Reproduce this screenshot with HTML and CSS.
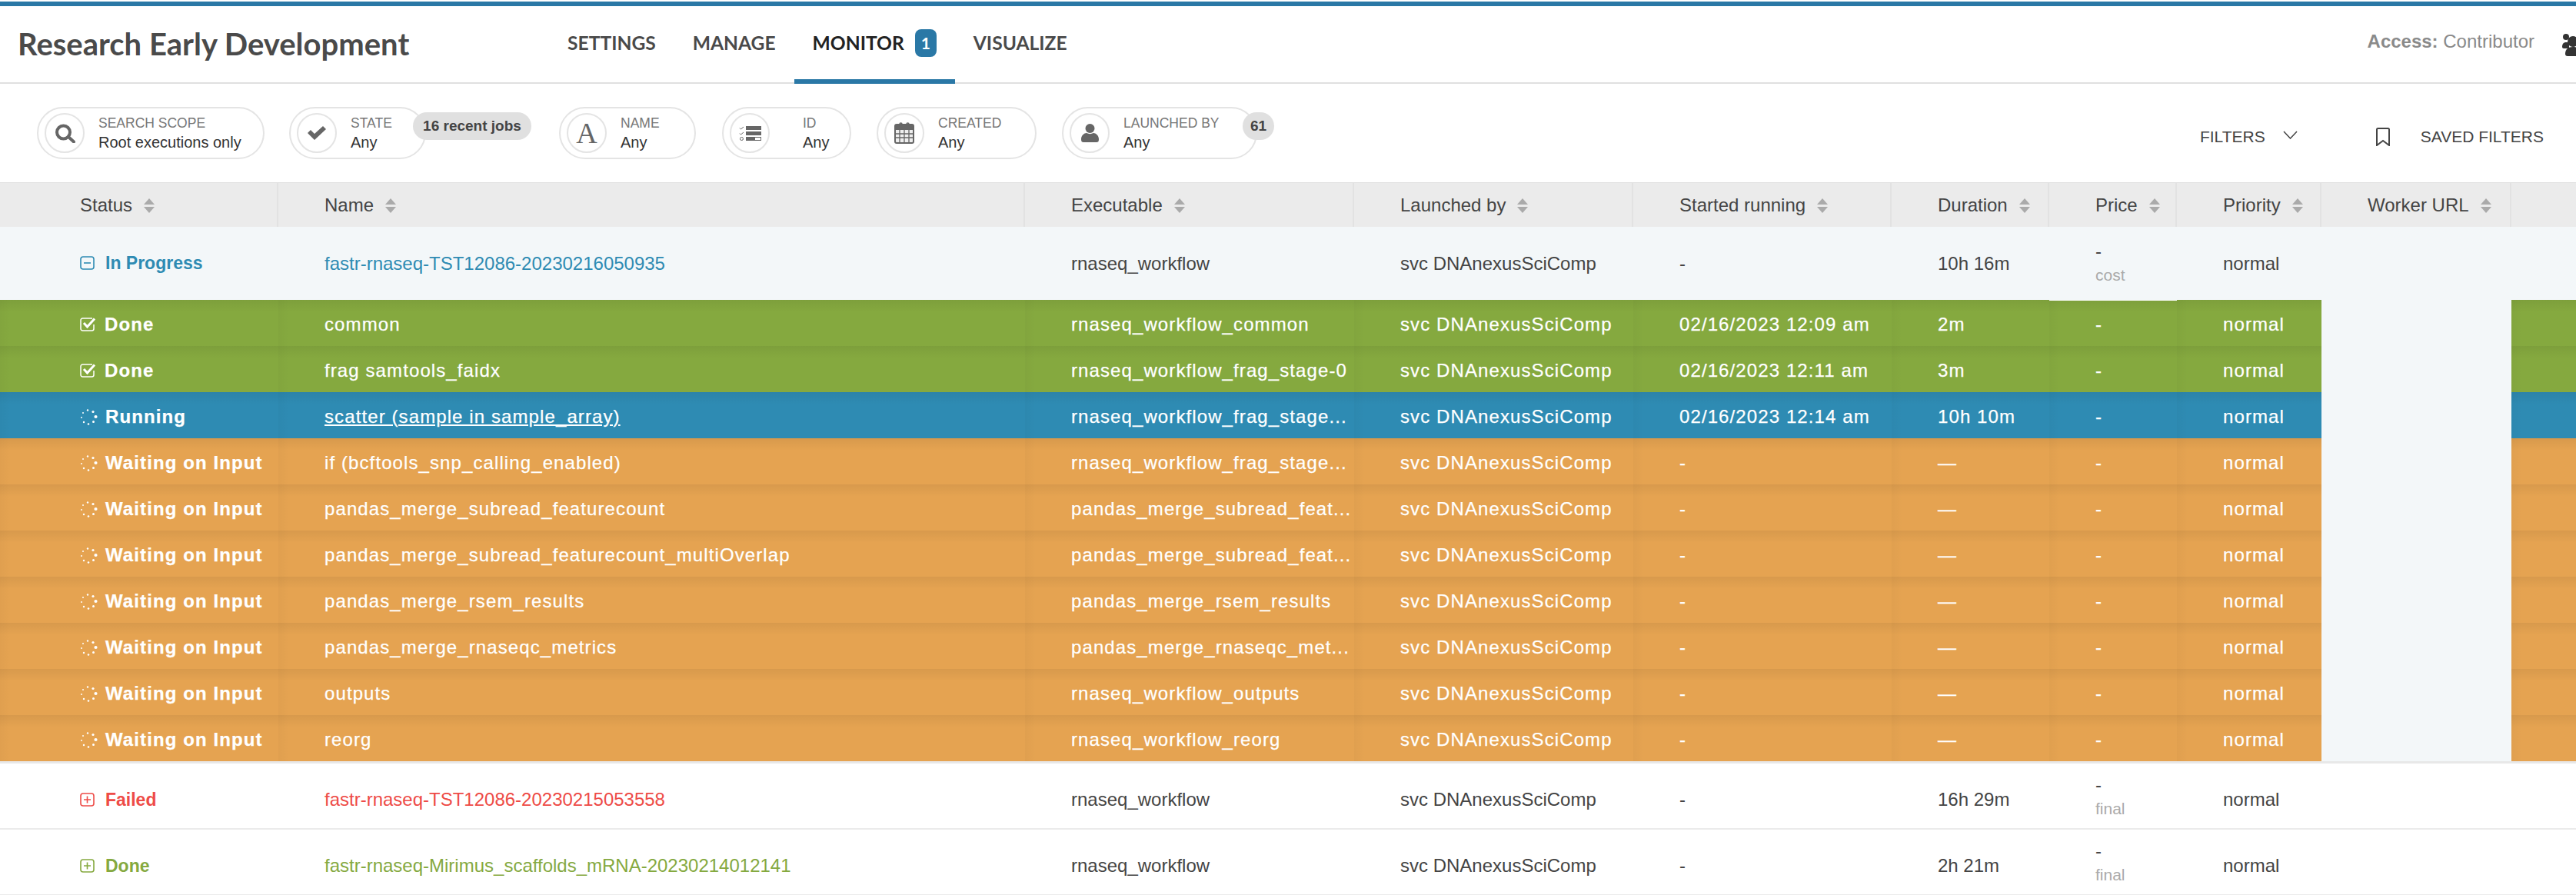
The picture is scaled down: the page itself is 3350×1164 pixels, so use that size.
FILE: index.html
```html
<!DOCTYPE html>
<html lang="en">
<head>
    <meta charset="UTF-8">
    <meta name="viewport" content="width=device-width, initial-scale=1.0">
    <title>Monitor - Research Early Development</title>
    <link rel="stylesheet" href="styles.css">
</head>
<body>
    <!-- Status icons, used by every row -->
    <svg class="icon-sheet">
        <symbol id="i-minus" viewBox="0 0 19 18"><rect x="1" y="1" width="17" height="16" rx="3" fill="none" stroke="currentColor" stroke-width="1.600"/><path d="M5 9h9" stroke="currentColor" stroke-width="1.600"/></symbol>
        <symbol id="i-plus" viewBox="0 0 19 18"><rect x="1" y="1" width="17" height="16" rx="3" fill="none" stroke="currentColor" stroke-width="1.600"/><path d="M5 9h9M9.500 4.500v9" stroke="currentColor" stroke-width="1.600"/></symbol>
        <symbol id="i-check" viewBox="0 0 22 18"><path d="M18 9v5.500a2.500 2.500 0 0 1-2.500 2.500h-12A2.500 2.500 0 0 1 1 14.500v-11A2.500 2.500 0 0 1 3.500 1H16" fill="none" stroke="currentColor" stroke-width="1.500"/><path d="M5 7l4.500 5L19 1.500" fill="none" stroke="currentColor" stroke-width="3"/></symbol>
        <symbol id="i-spin" viewBox="0 0 23 21" fill="currentColor"><circle cx="10" cy="1.500" r="1.200"/><circle cx="17" cy="3.500" r="1.600"/><circle cx="20.500" cy="10" r="2.100"/><circle cx="17.500" cy="16.500" r="1.500"/><circle cx="11" cy="19.500" r="1.300"/><circle cx="5" cy="17" r="1.200"/><circle cx="2" cy="11" r="1"/><circle cx="4" cy="5" r="1"/></symbol>
    </svg>

    <!-- Project header -->
    <header class="project-header">
        <h1 class="project-title">Research Early Development</h1>
        <nav>
            <ul class="tabs">
                <li><a href="#">SETTINGS</a></li>
                <li><a href="#">MANAGE</a></li>
                <li class="active"><a href="#">MONITOR</a><span class="tab-badge">1</span></li>
                <li><a href="#">VISUALIZE</a></li>
            </ul>
        </nav>
        <div class="access">
            <span><b>Access:</b> Contributor</span>
            <svg class="access-icon" viewBox="0 0 32 30"><circle cx="5" cy="4" r="4"/><path d="M0 17c0-4 2-6 5-6h4v8H2c-1 0-2-1-2-2z"/><circle cx="14" cy="10" r="7"/><path d="M4 26c0-6 4-9 10-9s14 3 14 9v3H7c-2 0-3-1-3-3z"/></svg>
        </div>
    </header>

    <!-- Filters -->
    <section class="filter-bar">
        <div class="pill pill-scope">
            <span class="pill-icon"><svg viewBox="0 0 27 25"><circle cx="11.500" cy="11" r="8.500" fill="none" stroke="#666" stroke-width="4"/><path d="M18 17l7 6.500" stroke="#666" stroke-width="4" stroke-linecap="round"/></svg></span>
            <div><div class="pill-label">SEARCH SCOPE</div><div class="pill-value">Root executions only</div></div>
        </div>
        <div class="pill pill-state">
            <span class="pill-icon"><svg viewBox="0 0 26 20"><path d="M1 10l4-4 5 5L21 1l4 4-15 14z" fill="#666"/></svg></span>
            <div><div class="pill-label">STATE</div><div class="pill-value">Any</div></div>
            <span class="pill-count count-jobs">16 recent jobs</span>
        </div>
        <div class="pill pill-name">
            <span class="pill-icon"><span class="letter-icon">A</span></span>
            <div><div class="pill-label">NAME</div><div class="pill-value">Any</div></div>
        </div>
        <div class="pill pill-id">
            <span class="pill-icon"><svg viewBox="0 0 29 19"><path d="M1 2.500l1.500 1.500L6 1M1 9.500l1.500 1.500L6 8" fill="none" stroke="#666"/><rect x="9" y="0" width="20" height="5" fill="#666"/><rect x="9" y="7" width="20" height="5" fill="#666"/><circle cx="3.500" cy="16.500" r="2" fill="none" stroke="#666"/><rect x="9.500" y="14.500" width="19" height="4" fill="#fff" stroke="#666"/><rect x="9" y="14" width="12" height="5" fill="#666"/></svg></span>
            <div><div class="pill-label">ID</div><div class="pill-value">Any</div></div>
        </div>
        <div class="pill pill-created">
            <span class="pill-icon"><svg viewBox="0 0 26 28"><rect x="1" y="3" width="24" height="24" rx="2" fill="#eee" stroke="#666" stroke-width="2"/><path d="M1 4h24v6H1z" fill="#666"/><path d="M7 5V2.500a1.500 1.500 0 0 1 3 0V5M16 5V2.500a1.500 1.500 0 0 1 3 0V5" fill="none" stroke="#666" stroke-width="1.500"/><path d="M1 15h24M1 20h24M7 10v17M13 10v17M19 10v17" stroke="#666" stroke-width="1.300"/></svg></span>
            <div><div class="pill-label">CREATED</div><div class="pill-value">Any</div></div>
        </div>
        <div class="pill pill-launched">
            <span class="pill-icon"><svg viewBox="0 0 23 24"><circle cx="11.500" cy="6" r="6" fill="#666"/><path d="M0 20c0-5 4-8 7-8 3 1.500 6 1.500 9 0 3 0 7 3 7 8 0 3-1 4-3 4H3c-2 0-3-1-3-4z" fill="#666"/></svg></span>
            <div><div class="pill-label">LAUNCHED BY</div><div class="pill-value">Any</div></div>
            <span class="pill-count count-users">61</span>
        </div>
        <div class="filter-actions">
            <a href="#" class="filter-link">FILTERS<svg class="chevron" viewBox="0 0 19 11"><path d="M1 1l8.500 9L18 1" fill="none" stroke="#444" stroke-width="1.500"/></svg></a>
            <a href="#" class="filter-link saved"><svg class="bookmark" viewBox="0 0 20 24"><path d="M2 2.500q0-1.500 1.500-1.500h13q1.500 0 1.500 1.500V23l-8-6-8 6z" fill="none" stroke="#444" stroke-width="2"/></svg>SAVED FILTERS</a>
        </div>
    </section>

    <!-- Executions -->
    <table class="jobs">
        <colgroup>
            <col class="c-status"><col class="c-name"><col class="c-exec"><col class="c-user"><col class="c-start"><col class="c-dur"><col class="c-price"><col class="c-prio"><col class="c-url"><col>
        </colgroup>
        <thead>
            <tr>
                <th>Status<i class="sort"></i></th>
                <th>Name<i class="sort"></i></th>
                <th>Executable<i class="sort"></i></th>
                <th>Launched by<i class="sort"></i></th>
                <th>Started running<i class="sort"></i></th>
                <th>Duration<i class="sort"></i></th>
                <th>Price<i class="sort"></i></th>
                <th>Priority<i class="sort"></i></th>
                <th>Worker URL<i class="sort"></i></th>
                <th></th>
            </tr>
        </thead>
        <tbody>
            <tr class="root in-progress">
                <td class="st"><svg class="st-icon box"><use href="#i-minus"/></svg>In Progress</td>
                <td><a href="#" class="root-link">fastr-rnaseq-TST12086-20230216050935</a></td>
                <td>rnaseq_workflow</td><td>svc DNAnexusSciComp</td><td>-</td><td>10h 16m</td>
                <td class="price"><div>-</div><div class="note">cost</div></td><td>normal</td><td></td><td></td>
            </tr>
            <tr class="child done">
                <td class="st"><svg class="st-icon tick"><use href="#i-check"/></svg>Done</td>
                <td>common</td><td>rnaseq_workflow_common</td><td>svc DNAnexusSciComp</td><td>02/16/2023 12:09 am</td><td>2m</td>
                <td class="price first">-</td><td>normal</td><td class="gap"></td><td></td>
            </tr>
            <tr class="child done">
                <td class="st"><svg class="st-icon tick"><use href="#i-check"/></svg>Done</td>
                <td>frag samtools_faidx</td><td>rnaseq_workflow_frag_stage-0</td><td>svc DNAnexusSciComp</td><td>02/16/2023 12:11 am</td><td>3m</td>
                <td class="price">-</td><td>normal</td><td class="gap"></td><td></td>
            </tr>
            <tr class="child run">
                <td class="st"><svg class="st-icon spin"><use href="#i-spin"/></svg>Running</td>
                <td><a href="#" class="child-link">scatter (sample in sample_array)</a></td><td>rnaseq_workflow_frag_stage...</td><td>svc DNAnexusSciComp</td><td>02/16/2023 12:14 am</td><td>10h 10m</td>
                <td class="price">-</td><td>normal</td><td class="gap"></td><td></td>
            </tr>
            <tr class="child wait">
                <td class="st"><svg class="st-icon spin"><use href="#i-spin"/></svg>Waiting on Input</td>
                <td>if (bcftools_snp_calling_enabled)</td><td>rnaseq_workflow_frag_stage...</td><td>svc DNAnexusSciComp</td><td>-</td><td>—</td>
                <td class="price">-</td><td>normal</td><td class="gap"></td><td></td>
            </tr>
            <tr class="child wait">
                <td class="st"><svg class="st-icon spin"><use href="#i-spin"/></svg>Waiting on Input</td>
                <td>pandas_merge_subread_featurecount</td><td>pandas_merge_subread_feat...</td><td>svc DNAnexusSciComp</td><td>-</td><td>—</td>
                <td class="price">-</td><td>normal</td><td class="gap"></td><td></td>
            </tr>
            <tr class="child wait">
                <td class="st"><svg class="st-icon spin"><use href="#i-spin"/></svg>Waiting on Input</td>
                <td>pandas_merge_subread_featurecount_multiOverlap</td><td>pandas_merge_subread_feat...</td><td>svc DNAnexusSciComp</td><td>-</td><td>—</td>
                <td class="price">-</td><td>normal</td><td class="gap"></td><td></td>
            </tr>
            <tr class="child wait">
                <td class="st"><svg class="st-icon spin"><use href="#i-spin"/></svg>Waiting on Input</td>
                <td>pandas_merge_rsem_results</td><td>pandas_merge_rsem_results</td><td>svc DNAnexusSciComp</td><td>-</td><td>—</td>
                <td class="price">-</td><td>normal</td><td class="gap"></td><td></td>
            </tr>
            <tr class="child wait">
                <td class="st"><svg class="st-icon spin"><use href="#i-spin"/></svg>Waiting on Input</td>
                <td>pandas_merge_rnaseqc_metrics</td><td>pandas_merge_rnaseqc_met...</td><td>svc DNAnexusSciComp</td><td>-</td><td>—</td>
                <td class="price">-</td><td>normal</td><td class="gap"></td><td></td>
            </tr>
            <tr class="child wait">
                <td class="st"><svg class="st-icon spin"><use href="#i-spin"/></svg>Waiting on Input</td>
                <td>outputs</td><td>rnaseq_workflow_outputs</td><td>svc DNAnexusSciComp</td><td>-</td><td>—</td>
                <td class="price">-</td><td>normal</td><td class="gap"></td><td></td>
            </tr>
            <tr class="child wait">
                <td class="st"><svg class="st-icon spin"><use href="#i-spin"/></svg>Waiting on Input</td>
                <td>reorg</td><td>rnaseq_workflow_reorg</td><td>svc DNAnexusSciComp</td><td>-</td><td>—</td>
                <td class="price last">-</td><td>normal</td><td class="gap"></td><td></td>
            </tr>
            <tr class="root failed">
                <td class="st"><svg class="st-icon box"><use href="#i-plus"/></svg>Failed</td>
                <td><a href="#" class="root-link">fastr-rnaseq-TST12086-20230215053558</a></td>
                <td>rnaseq_workflow</td><td>svc DNAnexusSciComp</td><td>-</td><td>16h 29m</td>
                <td class="price"><div>-</div><div class="note">final</div></td><td>normal</td><td></td><td></td>
            </tr>
            <tr class="root ok">
                <td class="st"><svg class="st-icon box"><use href="#i-plus"/></svg>Done</td>
                <td><a href="#" class="root-link">fastr-rnaseq-Mirimus_scaffolds_mRNA-20230214012141</a></td>
                <td>rnaseq_workflow</td><td>svc DNAnexusSciComp</td><td>-</td><td>2h 21m</td>
                <td class="price"><div>-</div><div class="note">final</div></td><td>normal</td><td></td><td></td>
            </tr>
        </tbody>
    </table>
</body>
</html>
```

FILE: styles.css
```css
* {
    margin: 0;
    padding: 0;
    box-sizing: border-box;
}

html, body {
    overflow: hidden;
}

body {
    width: 3350px;
    height: 1164px;
    font-family: "Liberation Sans", Arial, sans-serif;
    background-color: white;
    color: #444;
    padding-top: 2px;
}

a {
    text-decoration: none;
    color: inherit;
}

.icon-sheet {
    display: none;
}

/* Header */
.project-header {
    display: flex;
    align-items: stretch;
    height: 107px;
    border-top: 6px solid #2a78a6;
    border-bottom: 2px solid #e0e0e0;
}

.project-title {
    width: 714px;
    padding-left: 23px;
    font-family: Lato, sans-serif;
    font-size: 40px;
    font-weight: 700;
    line-height: 98px;
    color: #4a4a4a;
    white-space: nowrap;
}

.tabs {
    list-style: none;
    display: flex;
    height: 101px;
    font-family: Lato, sans-serif;
    font-size: 24.600px;
    font-weight: 700;
    color: #4a4a4a;
}

.tabs li {
    display: flex;
    align-items: center;
    padding: 0 24px 6px;
}

.tabs li.active {
    color: #222;
    border-bottom: 6px solid #2a78a6;
    padding-bottom: 0;
}

.tab-badge {
    display: inline-block;
    width: 28px;
    height: 36px;
    margin-left: 14px;
    border-radius: 8px;
    background-color: #2a78a6;
    color: white;
    font-size: 21px;
    line-height: 36px;
    text-align: center;
}

.access {
    margin-left: auto;
    margin-right: -14px;
    display: flex;
    align-items: flex-start;
    gap: 36px;
    padding-top: 32px;
    font-size: 24px;
    line-height: 27px;
    color: #8a8a8a;
    white-space: nowrap;
}

.access-icon {
    width: 32px;
    height: 30px;
    margin-top: 4px;
    fill: #333;
}

/* Filter bar */
.filter-bar {
    display: flex;
    align-items: center;
    height: 129px;
    padding-left: 48px;
    border-bottom: 1px solid #e0e0e0;
}

.pill {
    position: relative;
    display: flex;
    align-items: center;
    gap: 18px;
    height: 68px;
    padding-left: 8px;
    border: 2px solid #e4e4e4;
    border-radius: 34px;
    background-color: white;
    margin-right: 32px;
}

.pill-scope { width: 296px; }
.pill-state { width: 178px; margin-right: 173px; }
.pill-name { width: 178px; margin-right: 34px; }
.pill-id { width: 168px; gap: 43px; margin-right: 33px; }
.pill-created { width: 208px; margin-right: 33px; }
.pill-launched { width: 254px; }

.pill-icon {
    display: flex;
    align-items: center;
    justify-content: center;
    flex-shrink: 0;
    width: 52px;
    height: 52px;
    border: 2px solid #e4e4e4;
    border-radius: 50%;
}

.pill-scope .pill-icon svg { width: 27px; height: 25px; }
.pill-state .pill-icon svg { width: 26px; height: 20px; }
.pill-id .pill-icon svg { width: 29px; height: 19px; }
.pill-created .pill-icon svg { width: 26px; height: 28px; }
.pill-launched .pill-icon svg { width: 23px; height: 24px; }

.letter-icon {
    font-family: "Liberation Serif", serif;
    font-size: 38px;
    line-height: 1;
    color: #666;
}

.pill-label {
    font-size: 17.500px;
    line-height: 24px;
    color: #777;
    white-space: nowrap;
}

.pill-value {
    font-size: 20px;
    line-height: 26px;
    color: #333;
    white-space: nowrap;
}

.pill-count {
    position: absolute;
    top: 5px;
    height: 36px;
    border-radius: 18px;
    background-color: #e0e0e0;
    font-size: 19px;
    font-weight: bold;
    line-height: 36px;
    text-align: center;
    color: #444;
}

.count-jobs {
    left: 159px;
    width: 154px;
}

.count-users {
    left: 233px;
    width: 41px;
}

.filter-actions {
    display: flex;
    align-items: center;
    margin-left: auto;
    padding-right: 42px;
    padding-top: 10px;
    font-size: 21px;
    color: #444;
}

.filter-link {
    display: flex;
    align-items: center;
    white-space: nowrap;
}

.chevron {
    width: 19px;
    height: 11px;
    margin-left: 23px;
    margin-top: -6px;
}

.saved {
    margin-left: 101px;
}

.bookmark {
    width: 20px;
    height: 24px;
    margin-right: 39px;
}

/* Table */
.jobs {
    width: 3350px;
    table-layout: fixed;
    border-collapse: separate;
    border-spacing: 0;
    font-size: 24px;
    background-color: white;
}

.c-status { width: 362px; }
.c-name { width: 971px; }
.c-exec { width: 428px; }
.c-user { width: 363px; }
.c-start { width: 336px; }
.c-dur { width: 205px; }
.c-price { width: 166px; }
.c-prio { width: 188px; }
.c-url { width: 247px; }

.jobs th {
    height: 57px;
    padding-left: 60px;
    background-color: #ebebeb;
    border-right: 2px solid #e2e2e2;
    font-weight: normal;
    text-align: left;
    color: #444;
    white-space: nowrap;
}

.jobs th:first-child,
.jobs td:first-child {
    padding-left: 104px;
}

.jobs th:last-child {
    border-right: none;
}

.sort {
    display: inline-block;
    position: relative;
    width: 15px;
    height: 19px;
    margin-left: 15px;
    vertical-align: -2px;
}

.sort::before,
.sort::after {
    content: "";
    position: absolute;
    left: 0;
    border-left: 7.500px solid transparent;
    border-right: 7.500px solid transparent;
}

.sort::before {
    top: 0;
    border-bottom: 8px solid #aaa;
}

.sort::after {
    bottom: 0;
    border-top: 8px solid #aaa;
}

.jobs td {
    padding-left: 60px;
    white-space: nowrap;
    overflow: hidden;
}

.jobs td.st {
    font-weight: bold;
}

.st-icon {
    height: 18px;
    vertical-align: -1px;
}

.st-icon.box {
    width: 19px;
    margin-right: 14px;
}

.st-icon.tick {
    width: 22px;
    margin-right: 10px;
}

.st-icon.spin {
    width: 23px;
    height: 21px;
    margin-right: 10px;
    vertical-align: -3px;
}

/* Root rows */
.root td {
    height: 86px;
    padding-top: 10px;
    border-bottom: 2px solid #ebebeb;
}

.jobs .root td.st {
    font-size: 23px;
}

.jobs .root td.price {
    padding-top: 3px;
}

.root .price div:first-child {
    line-height: 30px;
}

.note {
    font-size: 21px;
    line-height: 32px;
    color: #aaa;
}

.in-progress td {
    height: 95px;
    padding-top: 0;
    background-color: #f3f7f9;
    border-bottom: none;
}

.in-progress .st,
.in-progress .root-link {
    color: #2e8bb3;
}

.jobs .in-progress td.price {
    padding-top: 0;
}

.failed td {
    height: 89px;
    border-top: 3px solid #e8e8e8;
}

.failed .st,
.failed .root-link {
    color: #ee4b47;
}

.ok .st,
.ok .root-link {
    color: #85a93f;
}

/* Child rows */
.child td {
    height: 60px;
    padding-top: 3px;
    color: white;
    letter-spacing: 1.100px;
    -webkit-text-stroke: 0.250px white;
    background-image:
        linear-gradient(to bottom, rgba(0, 0, 0, 0.06), rgba(0, 0, 0, 0) 16px),
        linear-gradient(to right, rgba(0, 0, 0, 0.025), rgba(0, 0, 0, 0) 14px);
}

.child td.gap {
    background-color: #f3f7f9;
    background-image: none;
}

.done td { background-color: #85a93f; }
.run td { background-color: #2e8bb3; }
.wait td { background-color: #e5a351; }

.child-link {
    text-decoration: underline;
}

.price.first {
    box-shadow: inset 0 1px 0 #fff;
}

.price.last {
    box-shadow: 0 1px 0 #e5a351;
}
```
